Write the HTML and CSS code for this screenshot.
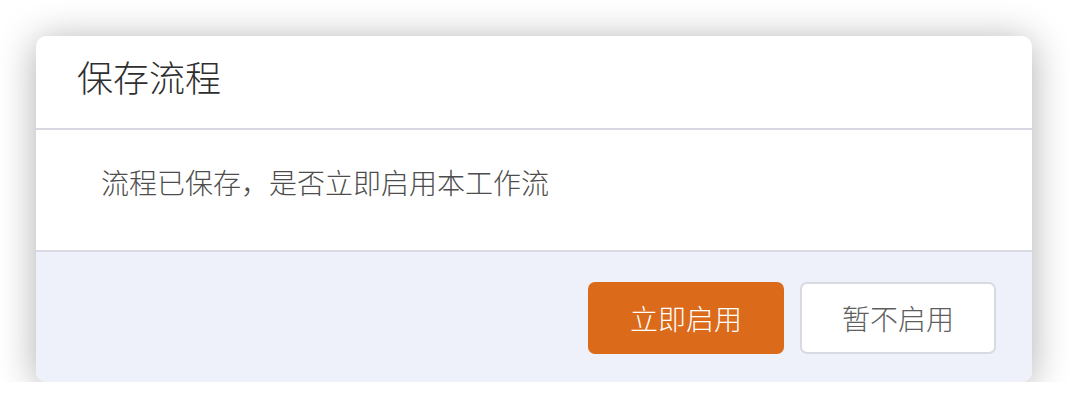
FILE: index.html
```html
<!DOCTYPE html>
<html lang="zh-CN">
<head>
<meta charset="utf-8">
<title>保存流程</title>
<link rel="stylesheet" href="styles.css">
</head>
<body>
<div class="page">
  <div class="dialog">
    <div class="dialog-header">
      <h2 class="dialog-title">保存流程</h2>
    </div>
    <div class="dialog-body">
      <p class="dialog-message">流程已保存，是否立即启用本工作流</p>
    </div>
    <div class="dialog-footer">
      <button class="btn btn-primary">立即启用</button>
      <button class="btn btn-default">暂不启用</button>
    </div>
  </div>
</div>
</body>
</html>
```
FILE: styles.css
```css
html, body {
  margin: 0;
  padding: 0;
  background: #ffffff;
  font-family: "Noto Sans CJK SC", "Noto Sans", sans-serif;
}
.page {
  padding: 36px 36px 0 36px;
}
.dialog {
  width: 996px;
  background: #ffffff;
  border-radius: 10px;
  box-shadow: 0 4px 38px rgba(0, 0, 0, 0.32);
  overflow: hidden;
}
.dialog-header {
  box-sizing: border-box;
  padding: 22px 41px 0 41px;
  border-bottom: 2px solid #d9d7e1;
  height: 94px;
}
.dialog-title {
  margin: 0;
  font-size: 36px;
  font-weight: 300;
  color: #2e2e2e;
  line-height: 1;
}
.dialog-body {
  height: 120px;
  padding: 38px 65px 0 65px;
  box-sizing: border-box;
}
.dialog-message {
  margin: 0;
  font-size: 28px;
  font-weight: 300;
  line-height: 1;
  color: #4d4d4d;
}
.dialog-footer {
  border-top: 2px solid #d9d9e2;
  background: #eef1f9;
  height: 132px;
  box-sizing: border-box;
  padding: 30px 36px 0 0;
  display: flex;
  justify-content: flex-end;
  align-items: flex-start;
  gap: 16px;
}
.btn {
  width: 196px;
  height: 72px;
  border-radius: 7px;
  font-family: "Noto Sans CJK SC", "Noto Sans", sans-serif;
  font-size: 28px;
  font-weight: 300;
  line-height: 1;
  cursor: pointer;
  box-sizing: border-box;
}
.btn-primary {
  background: #db6a1a;
  border: none;
  color: #ffffff;
}
.btn-default {
  background: #ffffff;
  border: 2px solid #d8dae2;
  color: #5e5e5e;
}
```
